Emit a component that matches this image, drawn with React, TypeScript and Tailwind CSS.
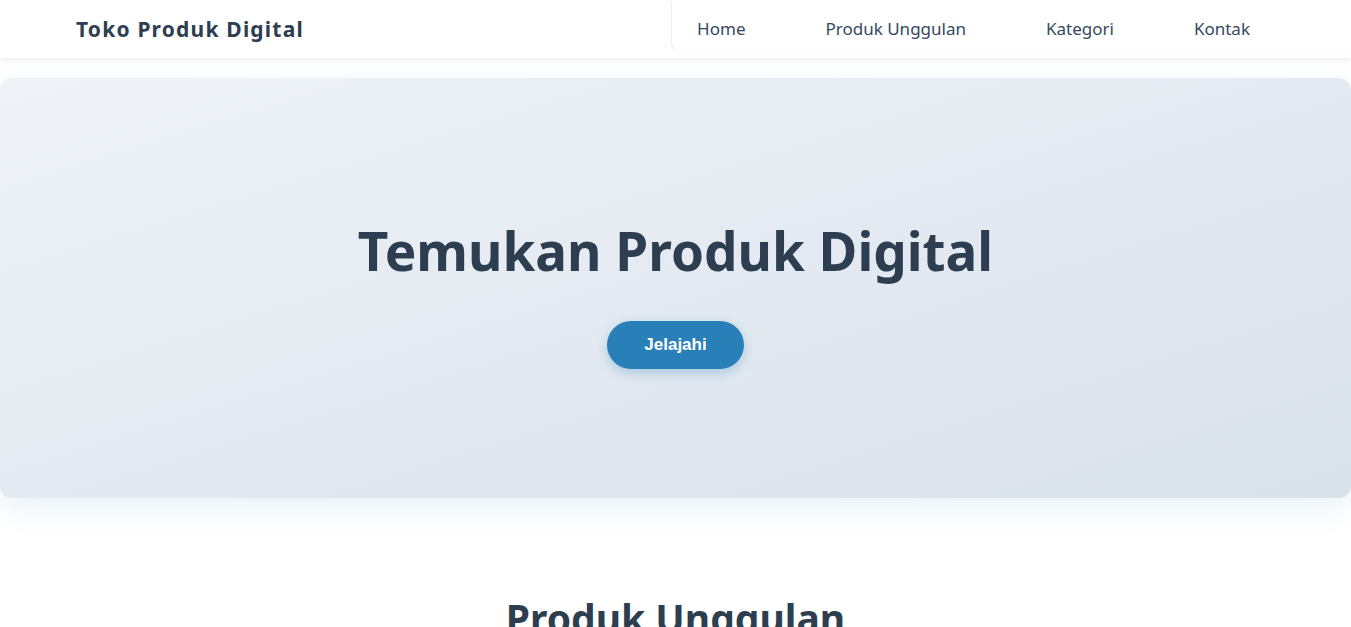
import React from "react";

export default function App() {
  const font = { fontFamily: '"Noto Sans", "Open Sans", sans-serif' };
  return (
    <div className="min-h-screen bg-white text-[#2c3e50]" style={font}>
      <header className="h-[58px] bg-white shadow-[0_2px_6px_rgba(0,0,0,0.08)] flex items-center justify-between pl-[76px] relative z-10">
        <div className="text-[21px] font-bold tracking-[1.2px] text-[#2c3e50] mt-[1px]">Toko Produk Digital</div>
        <nav className="self-start mt-[2px] h-[51px] border-l border-b border-l-[#eceef1] border-b-[#f9fafb] rounded-bl-[10px] flex items-center pl-[25px] pr-[101px] pt-[3px] gap-[80px] text-[17px] text-[#34495e]">
          <a>Home</a>
          <a>Produk Unggulan</a>
          <a>Kategori</a>
          <a>Kontak</a>
        </nav>
      </header>
      <main className="pt-[20px]">
        <section className="h-[420px] rounded-[12px] bg-gradient-to-br from-[#eff3f7] to-[#d9e1eb] shadow-[0_10px_30px_rgba(41,128,185,0.10)] flex flex-col items-center pt-[146px]">
          <h1 className="text-[53px] font-bold leading-none text-[#2c3e50]">Temukan Produk Digital</h1>
          <button
            className="mt-[44px] w-[137px] h-[48px] rounded-full bg-[#2980b9] text-white text-[17px] font-bold shadow-[0_4px_12px_rgba(41,128,185,0.3)]"
            style={{ fontFamily: '"Liberation Sans", Arial, sans-serif' }}
          >
            Jelajahi
          </button>
        </section>
        <section className="pt-[100px] flex justify-center">
          <h2 className="text-[39px] font-bold text-[#2c3e50] leading-none whitespace-nowrap">Produk Unggulan</h2>
        </section>
      </main>
    </div>
  );
}
